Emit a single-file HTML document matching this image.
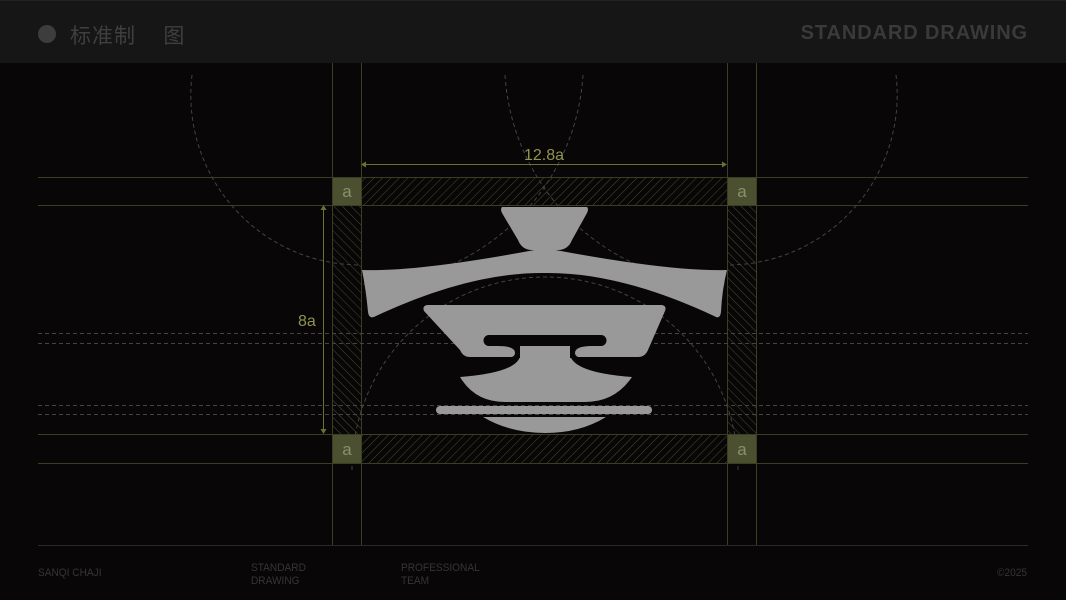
<!DOCTYPE html>
<html><head><meta charset="utf-8"><style>
html,body{margin:0;padding:0;background:#080606;}
body{width:1066px;height:600px;overflow:hidden;position:relative;font-family:"Liberation Sans","Noto Sans CJK SC",sans-serif;}
.hdr{position:absolute;left:0;top:0;width:1066px;height:63px;background:#161616;border-top:1px solid #222;box-sizing:border-box;}
.dot{position:absolute;left:38px;top:24px;width:18px;height:18px;border-radius:50%;background:#3d3d3d;}
.t1{position:absolute;left:70px;top:19px;font-size:21px;color:#3f3f3f;letter-spacing:1px;}
.t2{position:absolute;right:38px;top:21px;font-size:20px;font-weight:bold;color:#3a3a3a;letter-spacing:0.9px;}
.f{position:absolute;font-size:11px;color:#363636;line-height:13px;transform-origin:left top;transform:scaleX(0.92);}
</style></head><body>
<div class="hdr"><div class="dot"></div><div class="t1">标准制&nbsp;&nbsp;&nbsp;&nbsp;图</div><div class="t2">STANDARD DRAWING</div></div>
<svg width="1066" height="600" style="position:absolute;left:0;top:0">
<defs>
<pattern id="h1" width="6" height="6" patternUnits="userSpaceOnUse" patternTransform="rotate(45)"><line x1="0" y1="0" x2="0" y2="6" stroke="#4a4f2c" stroke-width="1"/></pattern>
<pattern id="h2" width="6" height="6" patternUnits="userSpaceOnUse" patternTransform="rotate(-45)"><line x1="0" y1="0" x2="0" y2="6" stroke="#4a4f2c" stroke-width="1"/></pattern>
<clipPath id="c"><rect x="0" y="75" width="1066" height="470"/></clipPath>
</defs>
<g fill="url(#h1)"><rect x="361" y="177" width="366" height="28"/><rect x="361" y="434" width="366" height="29"/></g>
<g fill="url(#h2)"><rect x="332" y="205" width="29" height="229"/><rect x="727" y="205" width="29" height="229"/></g>
<g stroke="#3a3e22" stroke-width="1">
<line x1="332.5" y1="63" x2="332.5" y2="545"/><line x1="361.5" y1="63" x2="361.5" y2="545"/>
<line x1="727.5" y1="63" x2="727.5" y2="545"/><line x1="756.5" y1="63" x2="756.5" y2="545"/>
<line x1="38" y1="177.5" x2="1028" y2="177.5"/><line x1="38" y1="205.5" x2="1028" y2="205.5"/>
<line x1="38" y1="434.5" x2="1028" y2="434.5"/><line x1="38" y1="463.5" x2="1028" y2="463.5"/>
</g>
<g stroke="#444" stroke-width="1" stroke-dasharray="4,3" fill="none" clip-path="url(#c)">
<line x1="38" y1="333.5" x2="1028" y2="333.5"/><line x1="38" y1="343.5" x2="1028" y2="343.5"/>
<line x1="38" y1="405.5" x2="1028" y2="405.5"/><line x1="38" y1="414.5" x2="1028" y2="414.5"/>
<path d="M192,75 A170,170 0 0 0 361,265"/>
<path d="M896,75 A170,170 0 0 1 727,265"/>
<path d="M505,75 A223,223 0 0 0 727,284"/>
<path d="M583,75 A223,223 0 0 1 361,284"/>
<path d="M352,470 A193,193 0 0 1 738,470"/>
</g>
<g fill="#4b5030"><rect x="333" y="178" width="28" height="27"/><rect x="728" y="178" width="28" height="27"/><rect x="333" y="435" width="28" height="28"/><rect x="728" y="435" width="28" height="28"/></g>
<g fill="#8c8f6c" font-size="17" text-anchor="middle" font-family="Liberation Sans,sans-serif"><text x="347" y="197">a</text><text x="742" y="197">a</text><text x="347" y="455">a</text><text x="742" y="455">a</text></g>
<g stroke="#6a7036" fill="#6a7036" stroke-width="1">
<line x1="364" y1="164.5" x2="724" y2="164.5"/><path d="M361,164.5 l5,-3 v6z" stroke="none"/><path d="M727,164.5 l-5,-3 v6z" stroke="none"/>
<line x1="323.5" y1="208" x2="323.5" y2="431"/><path d="M323.5,205 l-3,5 h6z" stroke="none"/><path d="M323.5,434 l-3,-5 h6z" stroke="none"/>
</g>
<g fill="#8f9450" font-size="16" font-family="Liberation Sans,sans-serif"><text x="524" y="160">12.8a</text><text x="298" y="326">8a</text></g>
<g fill="#999">
<path d="M502,207 H587 Q589,209 587,213 L572,240 Q568,250 558,250 H532 Q522,250 518,240 L502,213 Q500,209 502,207Z"/>
<path d="M362,270 Q420,272 545,248 Q670,272 727,270 Q722,290 721,312 Q720,320 714,316 Q620,272 545,273 Q470,272 376,316 Q369,320 368,312 Q366,290 362,270Z"/>
<path d="M427,305 H662 Q667,306 665,311 L648,350 Q645,357 638,357 H470 Q463,357 460,350 L424,311 Q422,306 427,305Z"/>
<path d="M520,350 Q526,372 460,377 H632 Q566,372 570,350Z"/>
<path d="M460,377 H632 Q615,402 585,402 H505 Q475,402 460,377Z"/>
<rect x="436" y="406" width="216" height="8" rx="4"/>
<path d="M483,417 H606 Q580,433 545,433 Q510,433 483,417Z"/>
</g>
<path fill="#080606" d="M489,335 H601 a5.5,5.5 0 0 1 0,11 H592 Q575,346 575,353 Q575,358 585,358 H505 Q515,358 515,353 Q515,346 498,346 H489 a5.5,5.5 0 0 1 0,-11Z"/>
<path fill="#999" d="M520,346 H570 V358 H520Z"/>
<line x1="38" y1="545.5" x2="1028" y2="545.5" stroke="#2a2a2a"/>
</svg>
<div class="f" style="left:38px;top:567px">SANQI CHAJI</div>
<div class="f" style="left:251px;top:562px">STANDARD<br>DRAWING</div>
<div class="f" style="left:401px;top:562px">PROFESSIONAL<br>TEAM</div>
<div class="f" style="left:997px;top:567px">©2025</div>
</body></html>
